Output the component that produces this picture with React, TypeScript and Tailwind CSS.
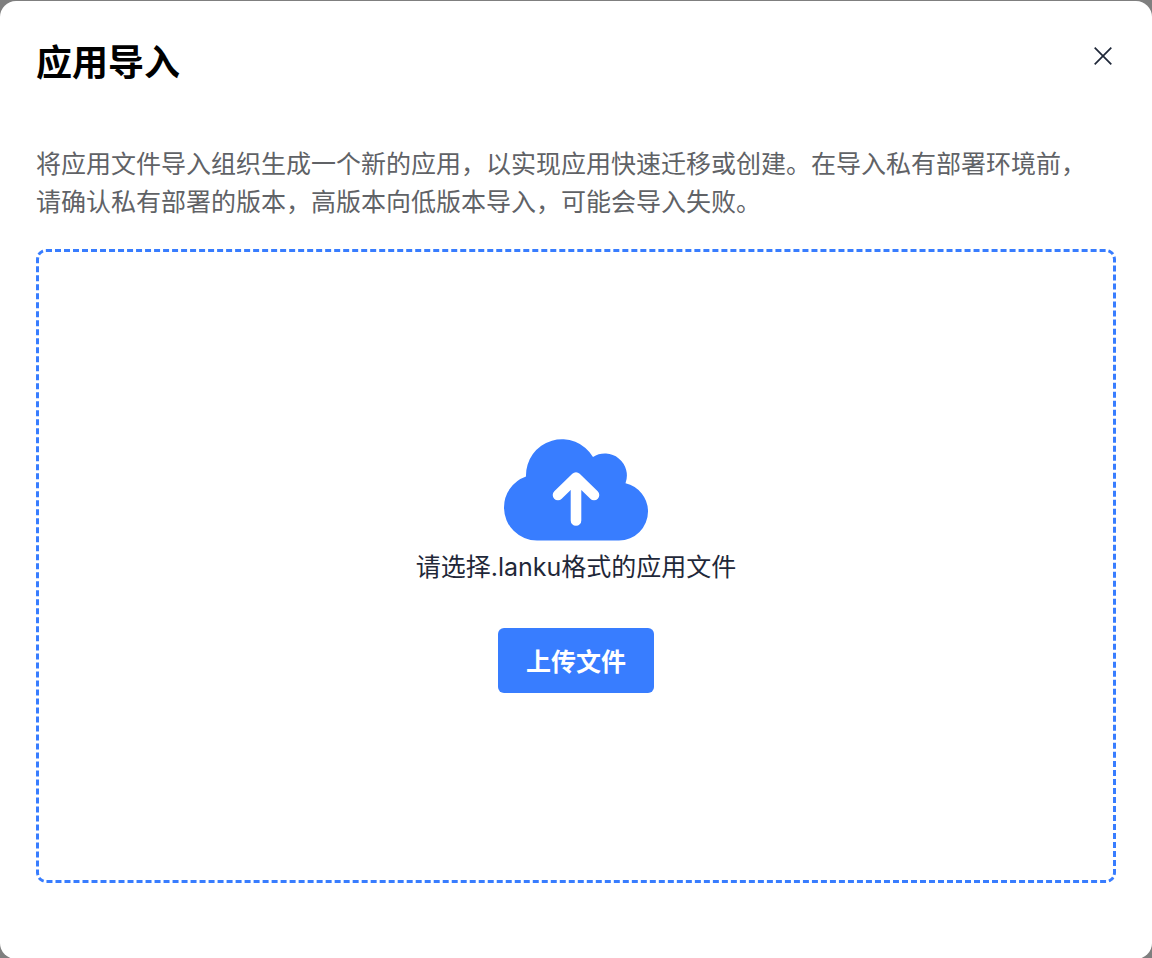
import { useRef, useState } from 'react'

function CloudUploadIcon() {
  return (
    <svg width="144" height="102" viewBox="0 0 144 102" fill="none" aria-hidden="true">
      <path
        d="M33 101.500A33 33 0 0 1 0 68.500A33 33 0 0 1 22 37.400A36 36 0 0 1 89 18A22 22 0 0 1 121.500 44.200A29 29 0 0 1 144 72.500A29 29 0 0 1 115 101.500Z"
        fill="#387dff"
      />
      <path
        d="M54 56L72 38.500L90 56M72 40V81.500"
        stroke="#fff"
        strokeWidth="10.6"
        strokeLinecap="round"
        strokeLinejoin="round"
      />
    </svg>
  )
}

function CloseIcon() {
  return (
    <svg width="18" height="18" viewBox="0 0 18 18" fill="none" aria-hidden="true">
      <path d="M0.700 0.700L17.300 17.300M17.300 0.700L0.700 17.300" stroke="#1f2839" strokeWidth="1.7" />
    </svg>
  )
}

export default function App() {
  const [fileName, setFileName] = useState('')
  const fileInputRef = useRef<HTMLInputElement>(null)

  const handleSelect = (e: React.ChangeEvent<HTMLInputElement>) => {
    const file = e.target.files?.[0]
    if (file) setFileName(file.name)
  }

  return (
    <div className="h-screen overflow-hidden bg-[#7f7f7f] pt-px font-['Inter','Noto_Sans_CJK_SC',sans-serif]">
      <div
        role="dialog"
        aria-labelledby="import-title"
        className="flex min-h-screen flex-col rounded-2xl bg-white px-9 pt-9 pb-[76px]"
      >
        <header className="flex items-start justify-between">
          <h1 id="import-title" className="text-4xl leading-[52px] font-bold text-black">
            应用导入
          </h1>
          <button type="button" aria-label="关闭" className="mt-1.5 p-1">
            <CloseIcon />
          </button>
        </header>

        <p className="mt-14 pr-2 text-[25px] leading-[38px] text-[#606266]">
          将应用文件导入组织生成一个新的应用，以实现应用快速迁移或创建。在导入私有部署环境前，请确认私有部署的版本，高版本向低版本导入，可能会导入失败。
        </p>

        {/* 上传区域 */}
        <div className="mt-7 flex flex-1 flex-col items-center justify-center rounded-[10px] border-3 border-dashed border-[#387dff]">
          <CloudUploadIcon />
          <p className="mt-[7px] text-[25px] leading-[38px] text-[#1f2839]">
            {fileName || '请选择.lanku格式的应用文件'}
          </p>
          <button
            type="button"
            onClick={() => fileInputRef.current?.click()}
            className="mt-[42px] h-[65px] rounded-md bg-[#387dff] px-7 pt-1 text-[25px] font-semibold text-white"
          >
            上传文件
          </button>
          <input
            type="file"
            ref={fileInputRef}
            onChange={handleSelect}
            accept=".lanku"
            aria-label="上传文件"
            className="hidden"
          />
        </div>
      </div>
    </div>
  )
}
